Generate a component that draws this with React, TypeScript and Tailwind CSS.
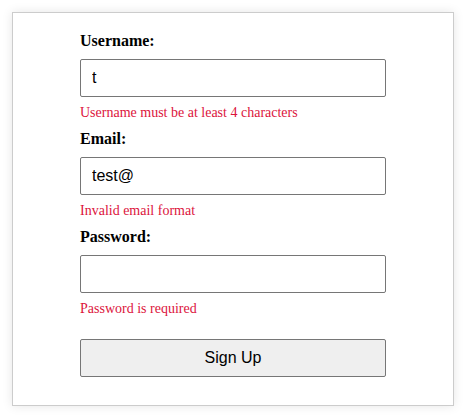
import { useState } from "react";

type Errors = { username?: string; email?: string; password?: string };

function validate(username: string, email: string, password: string): Errors {
  const errors: Errors = {};
  if (username.length < 4) errors.username = "Username must be at least 4 characters";
  if (!/^[^\s@]+@[^\s@]+\.[^\s@]+$/.test(email)) errors.email = "Invalid email format";
  if (!password) errors.password = "Password is required";
  return errors;
}

export default function App() {
  const [username, setUsername] = useState("t");
  const [email, setEmail] = useState("test@");
  const [password, setPassword] = useState("");
  const errors = validate(username, email, password);

  return (
    <div className="min-h-screen bg-white p-3">
      <div className="w-[442px] border border-[#cccccc] bg-white pt-[19px] pb-[28px] shadow-[0_0_10px_rgba(0,0,0,0.1)]">
        <form
          className="mx-auto w-[306px]"
          onSubmit={(e) => e.preventDefault()}
        >
          <Field
            label="Username:"
            type="text"
            value={username}
            onChange={setUsername}
            error={errors.username}
          />
          <Field
            label="Email:"
            type="email"
            value={email}
            onChange={setEmail}
            error={errors.email}
          />
          <Field
            label="Password:"
            type="password"
            value={password}
            onChange={setPassword}
            error={errors.password}
          />
          <button
            type="submit"
            className="mt-[22px] block h-[38px] w-full rounded-[2px] border border-[#767676] bg-[#efefef] text-[16px] text-black font-['Liberation_Sans',Arial,sans-serif] hover:bg-[#e5e5e5]"
          >
            Sign Up
          </button>
        </form>
      </div>
    </div>
  );
}

function Field({
  label,
  type,
  value,
  onChange,
  error,
}: {
  label: string;
  type: string;
  value: string;
  onChange: (v: string) => void;
  error?: string;
}) {
  return (
    <div className="mb-[9px]">
      <label className="mb-[9px] block text-[16px] leading-[18px] font-bold text-black font-['Liberation_Serif','Times_New_Roman',serif]">
        {label}
      </label>
      <input
        type={type}
        value={value}
        onChange={(e) => onChange(e.target.value)}
        className="block h-[38px] w-full rounded-[2px] border border-[#767676] bg-white px-[11px] text-[16px] text-black outline-none font-['Liberation_Sans',Arial,sans-serif]"
      />
      {error && (
        <p className="mt-[8px] text-[14px] leading-[16px] text-[#dc143c] font-['Liberation_Serif','Times_New_Roman',serif]">
          {error}
        </p>
      )}
    </div>
  );
}
